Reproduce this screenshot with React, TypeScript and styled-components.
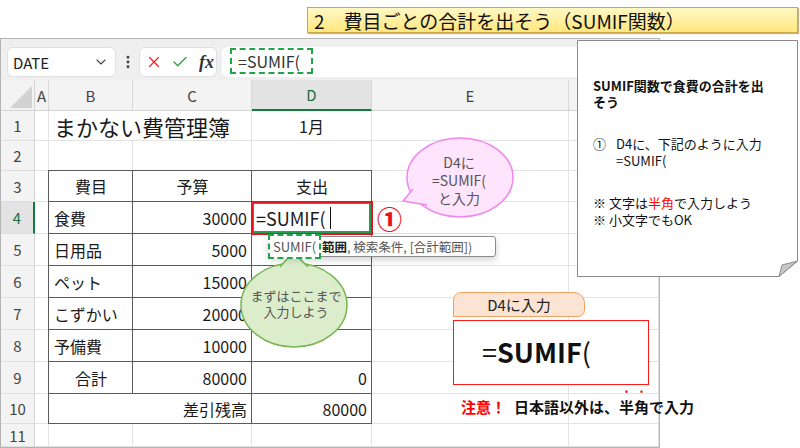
import React from "react";
import styled, { createGlobalStyle } from "styled-components";
import { X, Check, ChevronDown, EllipsisVertical } from "lucide-react";

const GlobalStyle = createGlobalStyle`
  html, body { margin: 0; padding: 0; background: #fff; }
  body { font-family: "Noto Sans CJK JP", "Noto Sans", sans-serif; color: #222; }
  * { box-sizing: border-box; }
`;

const Page = styled.div`
  width: 800px;
  height: 448px;
  display: flex;
  flex-direction: column;
  overflow: hidden;
  background: #fff;
`;

const TopBar = styled.header`
  height: 38px;
  flex: none;
  display: flex;
  justify-content: flex-end;
  align-items: flex-start;
  padding: 7px 2px 0 0;
`;

const TitleBanner = styled.h1`
  margin: 0;
  width: 491px;
  height: 26px;
  padding: 0 0 0 6px;
  display: flex;
  align-items: center;
  font-size: 19px;
  font-weight: 400;
  line-height: 1;
  color: #111;
  white-space: nowrap;
  background: linear-gradient(#fff8c4, #ffe67e);
  border: 1px solid #cba94a;
  box-shadow: 1px 1px 1px rgba(120, 90, 0, 0.45);
`;

const Main = styled.main`
  flex: 1;
  position: relative;
  display: flex;
  min-height: 0;
`;

const ExcelWindow = styled.section`
  width: 660px;
  height: 410px;
  border: 1px solid #b4b4b4;
  display: flex;
  flex-direction: column;
  background: #fff;
`;

const FormulaBar = styled.div`
  height: 41px;
  flex: none;
  background: #efefef;
  display: flex;
  align-items: center;
  padding: 5px 0 0 6px;
`;

const NameBox = styled.div`
  width: 109px;
  height: 30px;
  background: #fff;
  border: 1px solid #e0e0e0;
  border-radius: 6px;
  display: flex;
  align-items: center;
  justify-content: space-between;
  padding: 0 6px 0 5px;
  font-size: 15px;
  color: #222;
`;

const DotsSlot = styled.div`
  width: 23px;
  display: flex;
  justify-content: center;
  color: #444;
`;

const ActionBox = styled.div`
  width: 78px;
  height: 30px;
  background: #fff;
  border: 1px solid #e0e0e0;
  border-radius: 6px;
  display: flex;
  align-items: center;
  gap: 8px;
  padding-left: 5px;
`;

const FxLabel = styled.span`
  font-family: "Liberation Serif", "DejaVu Serif", serif;
  font-style: italic;
  font-weight: 700;
  font-size: 18px;
  color: #333;
  margin-left: 2px;
`;

const FormulaInput = styled.div`
  flex: 1;
  height: 30px;
  margin-left: 5px;
  background: #fff;
  border-radius: 6px 0 0 6px;
  display: flex;
  align-items: flex-start;
  padding: 1px 0 0 8px;
`;

const DashedFormula = styled.div`
  width: 83px;
  height: 26px;
  border: 2px dashed #1fa64a;
  display: flex;
  align-items: center;
  padding-left: 6px;
  font-size: 16px;
  color: #333;
`;

const Sheet = styled.div`
  flex: 1;
  display: grid;
  grid-template-columns: 34px 14px 84px 119px 120px 197px 1fr;
  grid-template-rows: 31px 30px 30px 31px 32px 32px 32px 32px 32px 32px 30px 1fr;
  min-height: 0;
  overflow: hidden;
`;

const Corner = styled.div`
  grid-column: 1;
  grid-row: 1;
  background: #f3f3f3;
  border-right: 1px solid #d4d4d4;
  border-bottom: 1px solid #d4d4d4;
  display: flex;
  align-items: flex-end;
  justify-content: flex-end;
  padding: 0 2px 2px 0;
`;

const ColHeader = styled.div<{ $col: number; $active?: boolean }>`
  grid-column: ${(p) => p.$col};
  grid-row: 1;
  background: ${(p) => (p.$active ? "#e3e3e3" : "#f3f3f3")};
  border-right: 1px solid #d8d8d8;
  border-bottom: ${(p) => (p.$active ? "2px solid #137a3f" : "1px solid #d4d4d4")};
  display: flex;
  align-items: center;
  justify-content: center;
  font-size: 15px;
  color: ${(p) => (p.$active ? "#1b6b3c" : "#444")};
`;

const RowHeader = styled.div<{ $row: number; $active?: boolean }>`
  grid-column: 1;
  grid-row: ${(p) => p.$row};
  background: ${(p) => (p.$active ? "#e3e3e3" : "#f3f3f3")};
  border-right: ${(p) => (p.$active ? "2px solid #137a3f" : "1px solid #d4d4d4")};
  border-bottom: 1px solid #dedede;
  display: flex;
  align-items: center;
  justify-content: center;
  font-size: 15px;
  color: ${(p) => (p.$active ? "#1b6b3c" : "#444")};
`;

const GridCell = styled.div<{ $col: number; $row: number; $span?: number; $align?: string; $size?: number }>`
  grid-column: ${(p) => p.$col} / span ${(p) => p.$span ?? 1};
  grid-row: ${(p) => p.$row};
  border-right: 1px solid #e3e3e3;
  border-bottom: 1px solid #e3e3e3;
  display: flex;
  align-items: center;
  justify-content: ${(p) => (p.$align === "center" ? "center" : p.$align === "right" ? "flex-end" : "flex-start")};
  padding: 0 5px;
  font-size: ${(p) => p.$size ?? 16}px;
  color: #1a1a1a;
  white-space: nowrap;
`;

const DataTable = styled.div`
  grid-column: 3 / 6;
  grid-row: 4 / 12;
  margin: -1px 0 0 -1px;
  display: grid;
  grid-template-columns: 84px 119px 1fr;
  grid-template-rows: 31px repeat(6, 32px) 1fr;
  border-top: 1px solid #5c5c5c;
  border-left: 1px solid #5c5c5c;
  background: #fff;
  position: relative;
  z-index: 1;
`;

const TCell = styled.div<{ $align?: string; $span?: number }>`
  grid-column: span ${(p) => p.$span ?? 1};
  border-right: 1px solid #5c5c5c;
  border-bottom: 1px solid #5c5c5c;
  display: flex;
  align-items: center;
  justify-content: ${(p) => (p.$align === "center" ? "center" : p.$align === "right" ? "flex-end" : "flex-start")};
  padding: 0 4px 0 5px;
  font-size: 16px;
  color: #1a1a1a;
  white-space: nowrap;
`;

const ActiveCell = styled(TCell)`
  position: relative;
  z-index: 2;
  outline: 2px solid #e5161e;
  outline-offset: -1px;
  box-shadow: inset 0 0 0 2px #2a9a5a;
  font-size: 18px;
  padding-left: 4px;
`;

const Caret = styled.span`
  display: inline-block;
  width: 1px;
  height: 22px;
  background: #111;
  margin-left: 4px;
`;

const Bubble = styled.div<{ $x: number; $y: number; $w: number; $h: number; $pt: number }>`
  position: absolute;
  left: ${(p) => p.$x}px;
  top: ${(p) => p.$y}px;
  width: ${(p) => p.$w}px;
  height: ${(p) => p.$h}px;
  display: flex;
  flex-direction: column;
  align-items: center;
  justify-content: center;
  padding-top: ${(p) => p.$pt}px;
  z-index: 3;
`;

const BubbleShape = styled.svg`
  position: absolute;
  inset: 0;
  overflow: visible;
`;

const BubbleText = styled.div<{ $lh: number; $size: number }>`
  position: relative;
  font-size: ${(p) => p.$size}px;
  line-height: ${(p) => p.$lh}px;
  color: #555;
  text-align: center;
  white-space: nowrap;
`;

const Tooltip = styled.div`
  position: absolute;
  left: 268px;
  top: 198px;
  width: 228px;
  height: 21px;
  background: #fff;
  border: 1px solid #8c8c8c;
  border-radius: 3px;
  box-shadow: 0 3px 7px rgba(0, 0, 0, 0.18);
  display: flex;
  align-items: center;
  font-size: 12.5px;
  color: #555;
  white-space: nowrap;
  z-index: 4;
`;

const TipFunc = styled.span`
  height: 25px;
  margin: 0 1px 0 -1px;
  padding: 0 3px;
  border: 2px dashed #1fa64a;
  display: flex;
  align-items: center;
  background: #fff;
  font-size: 13px;
`;

const TipBold = styled.b`
  color: #222;
  font-weight: 700;
`;

const CircleMark = styled.div`
  position: absolute;
  left: 377px;
  top: 165px;
  font-size: 25px;
  font-weight: 900;
  line-height: 30px;
  color: #e8141b;
  z-index: 3;
`;

const Note = styled.aside`
  position: absolute;
  left: 577px;
  top: 2px;
  width: 221px;
  height: 237px;
  padding: 38px 10px 0 16px;
  display: flex;
  flex-direction: column;
  font-size: 13px;
  color: #111;
  z-index: 5;
`;

const NoteShape = styled.svg`
  position: absolute;
  inset: 0;
`;

const NoteTitle = styled.div`
  position: relative;
  font-weight: 700;
  line-height: 16px;
`;

const NoteStep = styled.div`
  position: relative;
  margin-top: 25px;
  display: grid;
  grid-template-columns: 23px 1fr;
  line-height: 17px;
`;

const NoteTips = styled.div`
  position: relative;
  margin-top: 25px;
  line-height: 17px;
`;

const Red = styled.span`
  color: #ff0000;
`;

const InputGuide = styled.div`
  position: absolute;
  left: 453px;
  top: 254px;
  display: flex;
  flex-direction: column;
  z-index: 3;
`;

const GuideTab = styled.div`
  width: 132px;
  height: 25px;
  background: #fbe4d4;
  border: 1.5px solid #f2a25e;
  border-radius: 8px 11px 7px 0;
  display: flex;
  align-items: center;
  justify-content: center;
  font-size: 15px;
  color: #222;
`;

const FormulaBox = styled.div`
  width: 196px;
  height: 65px;
  margin-top: 3px;
  background: #fff;
  border: 1.5px solid #ff1a1a;
  display: flex;
  align-items: center;
  padding: 0 0 2px 28px;
  font-size: 27px;
  font-weight: 700;
  color: #111;
`;

const FormulaThin = styled.span`
  font-weight: 400;
`;

const Caution = styled.div`
  margin: 0 0 0 8px;
  font-size: 15px;
  font-weight: 700;
  line-height: 22px;
  color: #111;
  white-space: nowrap;
`;

const CautionLead = styled.span`
  color: #ff0000;
  margin-right: 8px;
`;

const Emph = styled.span`
  text-emphasis: filled dot #ff0000;
  -webkit-text-emphasis: filled dot #ff0000;
  text-emphasis-position: over right;
`;

const COLS = ["A", "B", "C", "D", "E", "F"];

type TRow = { text: string; align?: string; span?: number; active?: boolean }[];

const tableRows: TRow[] = [
  [{ text: "費目", align: "center" }, { text: "予算", align: "center" }, { text: "支出", align: "center" }],
  [{ text: "食費" }, { text: "30000", align: "right" }, { text: "=SUMIF(", active: true }],
  [{ text: "日用品" }, { text: "5000", align: "right" }, { text: "" }],
  [{ text: "ペット" }, { text: "15000", align: "right" }, { text: "" }],
  [{ text: "こずかい" }, { text: "20000", align: "right" }, { text: "" }],
  [{ text: "予備費" }, { text: "10000", align: "right" }, { text: "" }],
  [{ text: "合計", align: "center" }, { text: "80000", align: "right" }, { text: "0", align: "right" }],
  [{ text: "差引残高", align: "right", span: 2 }, { text: "80000", align: "right" }],
];

function backgroundCells() {
  const cells: React.ReactNode[] = [];
  for (let r = 1; r <= 11; r++) {
    for (let c = 2; c <= 7; c++) {
      if (r === 1 && (c === 3 || c === 4 || c === 5)) continue;
      if (r >= 3 && r <= 10 && c >= 3 && c <= 5) continue;
      cells.push(<GridCell key={`${r}-${c}`} $col={c} $row={r + 1} />);
    }
  }
  return cells;
}

export default function App() {
  return (
    <>
      <GlobalStyle />
      <Page>
        <TopBar>
          <TitleBanner>2　費目ごとの合計を出そう（SUMIF関数）</TitleBanner>
        </TopBar>
        <Main>
          <ExcelWindow>
            <FormulaBar>
              <NameBox>
                <span>DATE</span>
                <ChevronDown size={16} strokeWidth={1.6} color="#444" />
              </NameBox>
              <DotsSlot>
                <EllipsisVertical size={16} strokeWidth={2.4} />
              </DotsSlot>
              <ActionBox>
                <X size={18} strokeWidth={1.6} color="#e8242a" />
                <Check size={18} strokeWidth={1.8} color="#3b9c45" />
                <FxLabel>fx</FxLabel>
              </ActionBox>
              <FormulaInput>
                <DashedFormula>=SUMIF(</DashedFormula>
              </FormulaInput>
            </FormulaBar>
            <Sheet>
              <Corner>
                <svg width="22" height="22" viewBox="0 0 22 22">
                  <polygon points="22,0 22,22 0,22" fill="#d2d2d2" />
                </svg>
              </Corner>
              {COLS.map((c, i) => (
                <ColHeader key={c} $col={i + 2} $active={c === "D"}>
                  {c}
                </ColHeader>
              ))}
              {Array.from({ length: 11 }, (_, i) => (
                <RowHeader key={i} $row={i + 2} $active={i + 1 === 4}>
                  {i + 1}
                </RowHeader>
              ))}
              {backgroundCells()}
              <GridCell $col={3} $row={2} $span={2} $size={22}>
                まかない費管理簿
              </GridCell>
              <GridCell $col={5} $row={2} $align="center">
                1月
              </GridCell>
              <DataTable>
                {tableRows.map((row, ri) =>
                  row.map((cell, ci) =>
                    cell.active ? (
                      <ActiveCell key={`${ri}-${ci}`}>
                        {cell.text}
                        <Caret />
                      </ActiveCell>
                    ) : (
                      <TCell key={`${ri}-${ci}`} $align={cell.align} $span={cell.span}>
                        {cell.text}
                      </TCell>
                    )
                  )
                )}
              </DataTable>
            </Sheet>
          </ExcelWindow>

          <Bubble $x={238} $y={210} $w={116} $h={104} $pt={8}>
            <BubbleShape width="116" height="104" viewBox="0 0 116 104">
              <ellipse cx="56" cy="57" rx="53" ry="42" fill="#dcedcc" stroke="#79b553" strokeWidth="1.5" />
              <path d="M42,19 L55,4 L70,19" fill="#dcedcc" stroke="#79b553" strokeWidth="1.5" strokeLinejoin="round" />
            </BubbleShape>
            <BubbleText $lh={16} $size={13}>
              まずはここまで
              <br />
              入力しよう
            </BubbleText>
          </Bubble>

          <Tooltip>
            <TipFunc>SUMIF(</TipFunc>
            <TipBold>範囲</TipBold>, 検索条件, [合計範囲])
          </Tooltip>

          <CircleMark>①</CircleMark>

          <Bubble $x={400} $y={96} $w={118} $h={88} $pt={4}>
            <BubbleShape width="118" height="88" viewBox="0 0 118 88">
              <ellipse cx="60" cy="43.5" rx="53" ry="39.5" fill="#ffe4fd" stroke="#ef85ef" strokeWidth="1.5" />
              <path d="M13,55 L3,67 L27,71" fill="#ffe4fd" stroke="#ef85ef" strokeWidth="1.5" strokeLinejoin="round" />
            </BubbleShape>
            <BubbleText $lh={18} $size={14}>
              D4に
              <br />
              =SUMIF(
              <br />
              と入力
            </BubbleText>
          </Bubble>

          <Note>
            <NoteShape width="221" height="237" viewBox="0 0 221 237">
              <path d="M0.5,0.5 H220.5 V221 L202,236.5 H0.5 Z" fill="#fff" stroke="#8a8a8a" strokeWidth="1" />
              <path d="M202,236.5 L205,225 L220.5,221 Z" fill="#c8c8c8" stroke="#8a8a8a" strokeWidth="1" strokeLinejoin="round" />
            </NoteShape>
            <NoteTitle>
              SUMIF関数で食費の合計を出
              <br />
              そう
            </NoteTitle>
            <NoteStep>
              <span>①</span>
              <span>
                D4に、下記のように入力
                <br />
                =SUMIF(
              </span>
            </NoteStep>
            <NoteTips>
              ※ 文字は<Red>半角</Red>で入力しよう
              <br />
              ※ 小文字でもOK
            </NoteTips>
          </Note>

          <InputGuide>
            <GuideTab>D4に入力</GuideTab>
            <FormulaBox>
              <FormulaThin>=</FormulaThin>SUMIF<FormulaThin>(</FormulaThin>
            </FormulaBox>
            <Caution>
              <CautionLead>注意！</CautionLead>日本語以外は、<Emph>半角</Emph>で入力
            </Caution>
          </InputGuide>
        </Main>
      </Page>
    </>
  );
}
